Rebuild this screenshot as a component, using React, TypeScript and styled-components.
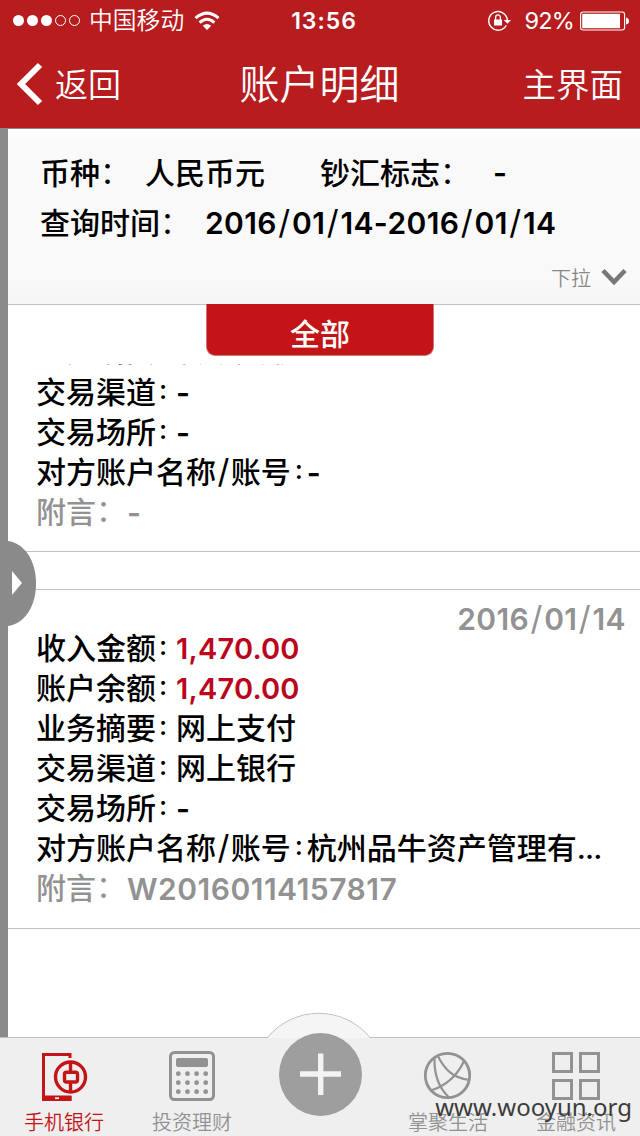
import React from 'react';
import styled, { createGlobalStyle } from 'styled-components';

const GlobalStyle = createGlobalStyle`
  * { box-sizing: border-box; }
  body {
    margin: 0;
    background: #fff;
    font-family: Inter, "Noto Sans CJK SC", sans-serif;
    color: #000;
  }
`;

const Screen = styled.div`
  position: relative;
  width: 640px;
  height: 1136px;
  display: flex;
  flex-direction: column;
  overflow: hidden;
`;

const StatusBar = styled.div`
  display: grid;
  grid-template-columns: 1fr auto 1fr;
  align-items: center;
  height: 40px;
  padding: 0 11px 0 13px;
  background: #b71c1f;
  color: #fff;
`;

const StatusGroup = styled.div<{ $end?: boolean }>`
  display: flex;
  align-items: center;
  justify-content: ${(p) => (p.$end ? 'flex-end' : 'flex-start')};
`;

const Carrier = styled.span`
  margin: 0 10px 0 8px;
  font-size: 23.8px;
  line-height: 40px;
  font-weight: 350;
`;

const Clock = styled.span`
  padding-left: 6px;
  font-size: 23px;
  font-weight: 600;
  letter-spacing: 0.95px;
  line-height: 42px;
`;

const Percent = styled.span`
  margin: 0 6px 0 12px;
  font-size: 23.5px;
  line-height: 42px;
  letter-spacing: -0.8px;
`;

const NavBar = styled.header`
  display: grid;
  grid-template-columns: 1fr auto 1fr;
  align-items: center;
  height: 88px;
  padding: 0 17px 0 16px;
  background: #b71c1f;
  color: #fff;
  font-weight: 350;
`;

const BackButton = styled.div`
  display: flex;
  align-items: center;
  gap: 12px;
  font-size: 33px;
`;

const BackLabel = styled.span`
  padding-bottom: 2px;
`;

const NavTitle = styled.h1`
  margin: 0;
  padding-top: 2px;
  font-size: 40px;
  line-height: 86px;
  font-weight: 350;
`;

const NavAction = styled.div`
  padding-bottom: 3px;
  text-align: right;
  font-size: 33.5px;
`;

const Main = styled.main`
  position: relative;
  flex: 1;
  display: flex;
  min-height: 0;
  border-top: 1px solid #888;
`;

const Rail = styled.div`
  width: 8px;
  background: #8a8a8a;
`;

const Handle = styled.svg`
  position: absolute;
  left: 0;
  top: 411px;
`;

const Content = styled.div`
  flex: 1;
  min-width: 0;
  display: flex;
  flex-direction: column;
`;

const Summary = styled.section`
  height: 176px;
  padding: 19px 13px 0 32px;
  border-bottom: 1px solid #c4c4c4;
  background: linear-gradient(#fdfdfd, #f9f9f9 12%, #f9f9f9 88%, #f6f6f6);
`;

const SummaryRow = styled.div`
  display: flex;
  height: 50px;
  font-size: 30px;
  font-weight: 500;
  line-height: 50px;
  white-space: nowrap;
`;

const SummaryLabel = styled.span<{ $width: number }>`
  display: flex;
  width: ${(p) => p.$width}px;
`;

const Latin = styled.span`
  font-weight: 600;
  letter-spacing: 0.4px;
`;

const Slash = styled.span`
  padding: 0 1.4px;
  font-size: 33px;
  line-height: 30px;
  font-weight: 400;
`;

const Expander = styled.div`
  display: flex;
  align-items: center;
  justify-content: flex-end;
  gap: 10px;
  height: 58px;
  font-size: 20px;
  font-weight: 350;
  color: #888;
`;

const FilterTab = styled.div`
  flex: none;
  width: 228px;
  height: 52px;
  margin: -1px 0 8px 198px;
  border: 1px solid #c9787a;
  border-top: 0;
  border-radius: 0 0 9px 9px;
  background: #c31417;
  color: #fff;
  font-size: 30px;
  font-weight: 500;
  line-height: 60px;
  text-align: center;
`;

const List = styled.div`
  flex: 1;
  min-height: 0;
  overflow: hidden;
`;

const Field = styled.div<{ $muted?: boolean }>`
  display: flex;
  height: 40px;
  line-height: 40px;
  font-size: 30px;
  font-weight: 500;
  color: ${(p) => (p.$muted ? '#929292' : '#000')};
  white-space: nowrap;
`;

const Card = styled.article<{ $scrolled?: boolean }>`
  height: ${(p) => (p.$scrolled ? 222 : 340)}px;
  margin-top: ${(p) => (p.$scrolled ? -34 : 37)}px;
  padding: 0 14px 0 28px;
  border-top: ${(p) => (p.$scrolled ? 0 : 1)}px solid #c4c4c4;
  border-bottom: 1px solid #c4c4c4;

  ${Field}:first-child {
    height: 42px;
  }
`;

const CardDate = styled.div`
  height: 38px;
  line-height: 58px;
  text-align: right;
  font-size: 30px;
  font-weight: 600;
  letter-spacing: 0.4px;
  color: #929292;
`;

const Colon = styled.span<{ $tight?: boolean }>`
  width: ${(p) => (p.$tight ? 16 : 20)}px;
  padding: 0 0 5px ${(p) => (p.$tight ? 4 : 3)}px;
  line-height: 36px;
  font-size: 27px;
  font-weight: 500;
`;

const WideColon = styled.span<{ $line?: number }>`
  width: 31px;
  font-weight: 400;
  line-height: ${(p) => p.$line ?? 37}px;
`;

const Value = styled.span<{ $tone?: 'amount' | 'muted' | 'latin' }>`
  font-weight: ${(p) => (p.$tone ? 600 : 500)};
  font-size: ${(p) => (p.$tone === 'amount' ? 29 : 30)}px;
  line-height: ${(p) => (p.$tone ? 42 : 40)}px;
  letter-spacing: ${(p) => (p.$tone === 'muted' ? 0.5 : p.$tone ? 0.2 : 0)}px;
  color: ${(p) => (p.$tone === 'amount' ? '#bb0620' : 'inherit')};
`;

const Ellipsis = styled.span`
  letter-spacing: -0.8px;
`;

const TabBar = styled.nav`
  position: relative;
  display: grid;
  grid-template-columns: repeat(5, 128px);
  height: 99px;
  border-top: 1px solid #c0c0c0;
  background: #efefef;
`;

const Tab = styled.div<{ $active?: boolean }>`
  display: flex;
  flex-direction: column;
  align-items: center;
  padding-top: 11px;
  font-size: 20px;
  line-height: 24px;
  font-weight: 350;
  color: ${(p) => (p.$active ? '#c31417' : '#929292')};
`;

const TabIcon = styled.svg`
  display: block;
  width: 56px;
  height: 56px;
  margin-bottom: 6px;
`;

const AddButton = styled.svg`
  position: absolute;
  left: 240px;
  top: -38px;
`;

const Watermark = styled.div`
  position: absolute;
  right: 8px;
  bottom: 12px;
  font-family: "Noto Sans", sans-serif;
  font-size: 24px;
  line-height: 34px;
  color: #3c3c3c;
`;

type Row = { label: string; value: string; amount?: boolean; tight?: boolean; truncated?: boolean };

const previous: Row[] = [
  { label: '业务摘要', value: '转账支取' },
  { label: '交易渠道', value: '-' },
  { label: '交易场所', value: '-' },
  { label: '对方账户名称/账号', value: '-', tight: true },
];

const current: Row[] = [
  { label: '收入金额', value: '1,470.00', amount: true },
  { label: '账户余额', value: '1,470.00', amount: true },
  { label: '业务摘要', value: '网上支付' },
  { label: '交易渠道', value: '网上银行' },
  { label: '交易场所', value: '-' },
  { label: '对方账户名称/账号', value: '杭州品牛资产管理有', tight: true, truncated: true },
];

const Slashed = ({ text }: { text: string }) => (
  <>
    {text.split('/').map((part, i) => (
      <React.Fragment key={i}>
        {i > 0 && <Slash>/</Slash>}
        {part}
      </React.Fragment>
    ))}
  </>
);

const Fields = ({ rows, note }: { rows: Row[]; note: string }) => (
  <>
    {rows.map((r) => (
      <Field key={r.label}>
        <span>
          <Slashed text={r.label} />
        </span>
        <Colon $tight={r.tight}>:</Colon>
        <Value $tone={r.amount ? 'amount' : r.value === '-' ? 'latin' : undefined}>
          {r.value}
          {r.truncated && <Ellipsis>...</Ellipsis>}
        </Value>
      </Field>
    ))}
    <Field $muted>
      <span>附言</span>
      <WideColon>：</WideColon>
      <Value $tone="muted">{note}</Value>
    </Field>
  </>
);

const Signal = () => (
  <svg width="68" height="14" viewBox="0 0 68 14">
    {[5.5, 19.5, 33.5].map((x) => (
      <circle key={x} cx={x} cy="6.5" r="5.5" fill="#fff" />
    ))}
    {[47.5, 61.5].map((x) => (
      <circle key={x} cx={x} cy="6.5" r="5" fill="none" stroke="#fff" />
    ))}
  </svg>
);

const Wifi = () => (
  <svg width="26" height="20" viewBox="0 0 26 20" fill="none" stroke="#fff" strokeWidth="3">
    <path d="M1.5 7.2Q13-3 24.5 7.2" />
    <path d="M5.6 11.6Q13 5 20.4 11.6" />
    <path d="M13 19L8.8 14.8Q13 11.4 17.2 14.8Z" fill="#fff" stroke="none" />
  </svg>
);

const RotationLock = () => (
  <svg width="24" height="22" viewBox="0 0 24 22">
    <path d="M18.3 15.2A9.3 9.3 0 1 1 19.3 10" fill="none" stroke="#fff" strokeWidth="1.4" />
    <path d="M15.8 10H23L19.4 13.8Z" fill="#fff" />
    <rect x="6" y="9.5" width="8" height="6" fill="#fff" />
    <path d="M7.6 10V7.5a2.4 2.6 0 0 1 4.8 0V10" fill="none" stroke="#fff" strokeWidth="1.3" />
  </svg>
);

const Battery = () => (
  <svg width="49" height="20" viewBox="0 0 49 20">
    <rect x="0.6" y="1" width="44" height="18" rx="2.5" fill="none" stroke="#fff" strokeWidth="1.1" />
    <rect x="2.2" y="2.8" width="37.8" height="14.4" fill="#fff" />
    <path d="M46 6.5Q49 7 49 10T46 13.5Z" fill="#fff" />
  </svg>
);

export default function App() {
  return (
    <Screen>
      <GlobalStyle />
      <StatusBar>
        <StatusGroup>
          <Signal />
          <Carrier>中国移动</Carrier>
          <Wifi />
        </StatusGroup>
        <Clock>13:56</Clock>
        <StatusGroup $end>
          <RotationLock />
          <Percent>92%</Percent>
          <Battery />
        </StatusGroup>
      </StatusBar>
      <NavBar>
        <BackButton>
          <svg width="27" height="44" viewBox="0 0 27 44" fill="none" stroke="#fff" strokeWidth="6">
            <path d="M24 3L5 22L24 41" />
          </svg>
          <BackLabel>返回</BackLabel>
        </BackButton>
        <NavTitle>账户明细</NavTitle>
        <NavAction>主界面</NavAction>
      </NavBar>
      <Main>
        <Rail />
        <Content>
          <Summary>
            <SummaryRow>
              <SummaryLabel $width={105}>
                币种<WideColon $line={48}>：</WideColon>
              </SummaryLabel>
              <SummaryLabel $width={175}>人民币元</SummaryLabel>
              <SummaryLabel $width={173}>
                钞汇标志<WideColon $line={48}>：</WideColon>
              </SummaryLabel>
              <Latin>-</Latin>
            </SummaryRow>
            <SummaryRow>
              <SummaryLabel $width={165}>
                查询时间<WideColon $line={48}>：</WideColon>
              </SummaryLabel>
              <Latin>
                <Slashed text="2016/01/14-2016/01/14" />
              </Latin>
            </SummaryRow>
            <Expander>
              下拉
              <svg width="26" height="18" viewBox="0 0 26 18" fill="none" stroke="#777" strokeWidth="4.6">
                <path d="M2 2.5L13 14L24 2.5" />
              </svg>
            </Expander>
          </Summary>
          <FilterTab>全部</FilterTab>
          <List>
            <Card $scrolled>
              <Fields rows={previous} note="-" />
            </Card>
            <Card>
              <CardDate>
                <Slashed text="2016/01/14" />
              </CardDate>
              <Fields rows={current} note="W20160114157817" />
            </Card>
          </List>
        </Content>
        <Handle width="36" height="88" viewBox="0 0 36 88">
          <path d="M0 1H8C24 3 36 20 36 43.5S24 84 8 86H0Z" fill="#8a8a8a" />
          <path d="M12 31L22 43L12 55Z" fill="#fff" />
        </Handle>
      </Main>
      <TabBar>
        <Tab $active>
          <TabIcon viewBox="0 0 56 56" fill="none" stroke="currentColor">
            <path d="M34 9V5.5H7.5V50H34V47" strokeWidth="3" />
            <path d="M6 46.5H35.5V52H6Z" fill="currentColor" stroke="none" />
            <path d="M19 49.2H23" stroke="#efefef" strokeWidth="1.8" />
            <circle cx="34.5" cy="28" r="15" strokeWidth="3.4" />
            <rect x="28.5" y="23.2" width="13" height="9.8" rx="2" strokeWidth="3.4" />
            <path d="M34.5 13V22M34.5 34V43" strokeWidth="3.4" />
          </TabIcon>
          手机银行
        </Tab>
        <Tab>
          <TabIcon viewBox="0 0 56 56" fill="currentColor">
            <rect x="6.5" y="3.5" width="43" height="47" rx="4" fill="none" stroke="currentColor" strokeWidth="3" />
            <rect x="12" y="9" width="32" height="9" rx="2" />
            {[24.7, 33.7, 42.7].map((y) =>
              [14.3, 23.5, 32.6, 41.7].map((x) => <circle key={`${x}-${y}`} cx={x} cy={y} r="2.4" />),
            )}
          </TabIcon>
          投资理财
        </Tab>
        <Tab />
        <Tab>
          <TabIcon viewBox="0 0 56 56" fill="none" stroke="currentColor" strokeWidth="2.2">
            <circle cx="27.5" cy="26.5" r="22.2" strokeWidth="2.8" />
            <path d="M14.5 8.5C14 23 18 38 29 48.5" />
            <path d="M17.5 6.5C25 21 33 29 49 31" />
            <path d="M44 12C38 25 28 36 11 41.5" />
          </TabIcon>
          掌聚生活
        </Tab>
        <Tab>
          <TabIcon viewBox="0 0 56 56" fill="none" stroke="currentColor" strokeWidth="3">
            <rect x="5.5" y="4.5" width="18" height="18" />
            <rect x="32.5" y="4.5" width="18" height="18" />
            <rect x="5.5" y="31.5" width="18" height="18" />
            <rect x="32.5" y="31.5" width="18" height="18" />
          </TabIcon>
          金融资讯
        </Tab>
        <AddButton width="160" height="136" viewBox="0 0 160 136">
          <path d="M27.5 38A66.4 66.4 0 0 1 130 38Z" fill="#f5f5f5" />
          <path d="M27.5 37.5A66.4 66.4 0 0 1 130 37.5" fill="none" stroke="#c0c0c0" />
          <circle cx="80.5" cy="74.5" r="41.5" fill="#9e9e9e" />
          <path d="M60 74H101M80.7 53.5V95" stroke="#f3f3f3" strokeWidth="5.4" />
        </AddButton>
      </TabBar>
      <Watermark>www.wooyun.org</Watermark>
    </Screen>
  );
}
